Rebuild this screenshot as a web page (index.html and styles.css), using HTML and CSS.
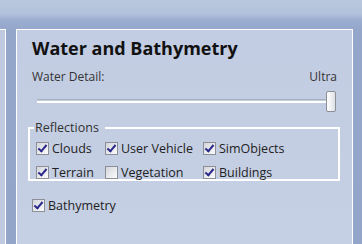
FILE: index.html
```html
<!DOCTYPE html>
<html lang="en">
<head>
    <meta charset="UTF-8">
    <meta name="viewport" content="width=device-width, initial-scale=1.0">
    <title>Water and Bathymetry</title>
    <link rel="stylesheet" href="styles.css">
</head>
<body>
    <div class="desk">
        <div class="side-panel"></div>
        <div class="panel">
            <h1>Water and Bathymetry</h1>
            <div class="detail-row">
                <span>Water Detail:</span>
                <span>Ultra</span>
            </div>
            <div class="slider">
                <div class="track"></div>
                <div class="thumb"></div>
            </div>
            <fieldset class="group">
                <legend>Reflections</legend>
                <div class="grid">
                    <label class="check"><span class="box on"></span>Clouds</label>
                    <label class="check"><span class="box on"></span>User Vehicle</label>
                    <label class="check"><span class="box on"></span>SimObjects</label>
                    <label class="check"><span class="box on"></span>Terrain</label>
                    <label class="check"><span class="box"></span>Vegetation</label>
                    <label class="check"><span class="box on"></span>Buildings</label>
                </div>
            </fieldset>
            <label class="check single"><span class="box on"></span>Bathymetry</label>
        </div>
    </div>
</body>
</html>
```

FILE: styles.css
```css
body {
    margin: 0;
    height: 244px;
    overflow: hidden;
    font-family: "Open Sans", "DejaVu Sans", sans-serif;
    color: #222;
    background: linear-gradient(to bottom, #bac7de 0px, #b3c1db 14px, #9badd0 20px, #94a7cb 30px, #93a6ca 100%);
}
.desk {
    display: flex;
    padding-top: 29px;
    gap: 10px;
}
.side-panel {
    width: 5px;
    height: 215px;
    border-top: 1px solid #fff;
    border-right: 1px solid #fff;
    background: #bfcae0;
}
.panel {
    width: 337px;
    height: 215px;
    border: 1px solid #fff;
    border-bottom: none;
    background: linear-gradient(to bottom, #c2cce2, #c6d0e4);
    padding: 7px 15px 0 15px;
    box-sizing: border-box;
}
h1 {
    margin: 0;
    font-size: 18px;
    line-height: 22px;
    font-weight: 700;
    color: #111;
}
.detail-row {
    display: flex;
    justify-content: space-between;
    margin-top: 10px;
    font-size: 12px;
    line-height: 16px;
    color: #333;
}
.slider {
    position: relative;
    height: 21px;
    margin: 6px 0 0 5px;
    width: 299px;
}
.track {
    position: absolute;
    left: 0;
    right: 4px;
    top: 8px;
    height: 1px;
    border-top: 1px solid #a9b0bb;
    border-bottom: 2px solid #fff;
}
.thumb {
    position: absolute;
    right: 0;
    top: 0;
    width: 8px;
    height: 19px;
    border: 1px solid #8a8f98;
    border-radius: 2px;
    background: linear-gradient(to right, #fff, #dfe1e5);
}
.group {
    margin: 9px 0 0 -4px;
    width: 312px;
    height: 60px;
    box-sizing: border-box;
    border: 2px solid #fff;
    padding: 0 0 0 6px;
}
legend {
    font-size: 12.5px;
    line-height: 14px;
    padding: 0 6px 0 1px;
    margin-left: -2px;
    color: #333;
}
.grid {
    display: grid;
    grid-template-columns: 69px 98px auto;
    row-gap: 7px;
    margin-top: 5px;
}
.check {
    display: flex;
    align-items: center;
    gap: 3px;
    font-size: 12.5px;
    line-height: 17px;
    color: #222;
}
.box {
    width: 11px;
    height: 11px;
    border: 1px solid #8c8f96;
    background: linear-gradient(135deg, #d4d6dc, #fbfbfc);
    position: relative;
}
.box.on::after {
    content: "";
    position: absolute;
    left: 3px;
    top: 0px;
    width: 3px;
    height: 7px;
    border-right: 2px solid #2b2a8c;
    border-bottom: 2px solid #2b2a8c;
    transform: rotate(40deg);
}
.single {
    margin-top: 16px;
}
```
